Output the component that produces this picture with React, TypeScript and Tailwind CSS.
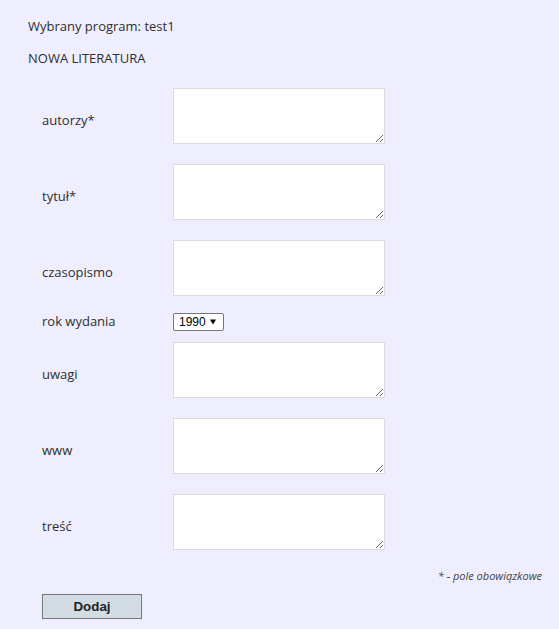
import React from "react";

function TextRow({ label, mt }: { label: string; mt: string }) {
  return (
    <div className={`flex items-center ${mt}`}>
      <label className="w-[131px] pt-[8px] text-[13px] leading-[19px]">{label}</label>
      <textarea className="block w-[212px] h-[56px] bg-white border border-[#dcdcdc] outline-none" />
    </div>
  );
}

export default function App() {
  return (
    <div className="min-h-screen bg-[#eeeeff] text-[#2e2e2e] font-['Open_Sans',sans-serif] pl-[28px] pt-[16px] pb-[10px]">
      <p className="text-[13px] leading-[20px]">Wybrany program: test1</p>
      <p className="mt-[12px] text-[13px] leading-[20px]">NOWA LITERATURA</p>
      <form className="pl-[14px] mt-[20px] w-[514px]" onSubmit={(e) => e.preventDefault()}>
        <TextRow label="autorzy*" mt="" />
        <TextRow label="tytuł*" mt="mt-[20px]" />
        <TextRow label="czasopismo" mt="mt-[20px]" />
        <div className="flex items-center mt-[16px]">
          <label className="w-[131px] text-[13px] leading-[19px]">rok wydania</label>
          <div className="relative">
            <select
              defaultValue="1990"
              className="appearance-none block w-[51px] h-[18px] bg-white border border-[#767676] rounded-[2px] pl-[5px] pr-[16px] text-[12px] leading-[16px] text-black font-['Liberation_Sans',Arial,sans-serif] outline-none"
            >
              <option>1990</option>
              <option>1991</option>
              <option>1992</option>
            </select>
            <svg className="pointer-events-none absolute right-[8px] top-[6px]" width="6" height="6" viewBox="0 0 6 6">
              <path d="M0 0.5 H6 L3 5.5 Z" fill="#000" />
            </svg>
          </div>
        </div>
        <TextRow label="uwagi" mt="mt-[11px]" />
        <TextRow label="www" mt="mt-[20px]" />
        <TextRow label="treść" mt="mt-[20px]" />
        <p className="mt-[18px] text-right text-[11px] leading-[16px] italic text-[#444]">* - pole obowiązkowe</p>
        <button
          type="submit"
          className="mt-[10px] block w-[100px] h-[25px] bg-[#d3dce2] border border-[#777777] text-[13.33px] font-bold text-[#222] font-['Liberation_Sans',Arial,sans-serif]"
        >
          Dodaj
        </button>
      </form>
    </div>
  );
}
